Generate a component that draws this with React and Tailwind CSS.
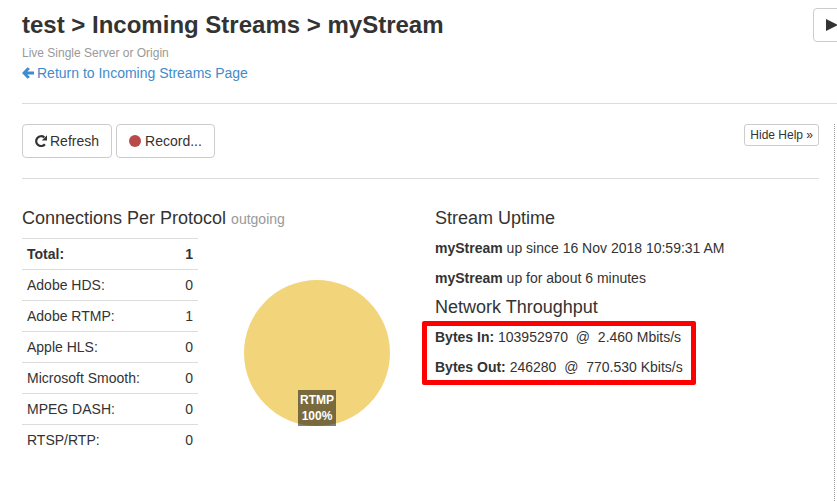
import React from "react";

const protocols = [
  ["Adobe HDS:", 0],
  ["Adobe RTMP:", 1],
  ["Apple HLS:", 0],
  ["Microsoft Smooth:", 0],
  ["MPEG DASH:", 0],
  ["RTSP/RTP:", 0],
];

const buttonClass =
  "flex h-[34px] shrink-0 items-center rounded border border-[#cccccc] bg-white px-3 text-[#333333]";

function ArrowIcon() {
  return (
    <svg viewBox="0 0 12 12" className="mr-[3px] h-3 w-3" fill="currentColor" aria-hidden="true">
      <path d="M0 6 L5.6 0.2 L8 1.9 L5.3 4.6 H12 V7.4 H5.3 L8 10.1 L5.6 11.8 Z" />
    </svg>
  );
}

function RefreshIcon() {
  return (
    <svg viewBox="0 0 12 12" className="mr-[3px] h-3 w-3" aria-hidden="true">
      <path d="M9.9 9.2 A4.9 4.9 0 1 1 9.3 2.4" fill="none" stroke="currentColor" strokeWidth="2.2" />
      <path d="M12 0.2 V5.4 H6.8 Z" fill="currentColor" />
    </svg>
  );
}

function Header() {
  return (
    <header className="flex justify-between border-b border-[#dddddd] pt-2 pb-5">
      <div className="pt-[3px]">
        <h1 className="text-2xl leading-7 font-bold whitespace-nowrap">
          test &gt; Incoming Streams &gt; myStream
        </h1>
        <p className="mt-1 text-xs leading-5 text-[#999999]">Live Single Server or Origin</p>
        <a href="#incoming-streams" className="flex items-center text-[#428bca]">
          <ArrowIcon />
          Return to Incoming Streams Page
        </a>
      </div>
      <button type="button" aria-label="Play" className={buttonClass + " -mr-[14px]"}>
        <svg viewBox="0 0 12 12" className="h-3 w-3" fill="currentColor" aria-hidden="true">
          <path d="M0 0 L12 6 L0 12 Z" />
        </svg>
      </button>
    </header>
  );
}

function Toolbar() {
  return (
    <div className="flex items-start justify-between border-b border-[#dddddd] pb-5">
      <div className="flex gap-1">
        <button type="button" className={buttonClass}>
          <RefreshIcon />
          Refresh
        </button>
        <button type="button" className={buttonClass}>
          <span className="mr-1 h-3 w-3 rounded-full bg-[#b94a48]" />
          Record...
        </button>
      </div>
      <button
        type="button"
        className="h-[22px] rounded-[3px] border border-[#cccccc] bg-white px-[5px] text-xs"
      >
        Hide Help »
      </button>
    </div>
  );
}

function Connections() {
  return (
    <section className="w-[413px] shrink-0">
      <h2 className="mb-[9px] text-lg leading-5">
        Connections Per Protocol <small className="text-sm leading-5 text-[#999999]">outgoing</small>
      </h2>
      <div className="flex">
        <table className="w-44 border-collapse self-start">
          <tbody>
            <tr className="border-t border-[#dddddd] font-bold">
              <th scope="row" className="p-[5px] text-left">Total:</th>
              <td className="p-[5px] text-right">1</td>
            </tr>
            {protocols.map(([name, count]) => (
              <tr key={name} className="border-t border-[#dddddd]">
                <th scope="row" className="p-[5px] text-left font-normal">{name}</th>
                <td className="p-[5px] text-right">{count}</td>
              </tr>
            ))}
          </tbody>
        </table>
        <div className="mt-[42px] ml-[46px] flex h-[146px] w-[146px] items-end justify-center rounded-full bg-[#f2d57a]">
          <div className="bg-black/50 px-[2px] py-[2px] text-center text-xs font-bold text-white">
            RTMP
            <br />
            100%
          </div>
        </div>
      </div>
    </section>
  );
}

function StreamDetails() {
  return (
    <section className="whitespace-nowrap">
      <h2 className="mb-2.5 text-lg leading-5">Stream Uptime</h2>
      <p className="mb-2.5">
        <strong>myStream</strong> up since 16 Nov 2018 10:59:31 AM
      </p>
      <p>
        <strong>myStream</strong> up for about 6 minutes
      </p>
      <h2 className="mt-[9px] mb-2.5 text-lg leading-5">Network Throughput</h2>
      <div className="relative w-fit">
        <p className="mb-2.5">
          <strong>Bytes In:</strong> 103952970 &nbsp;@&nbsp; 2.460 Mbits/s
        </p>
        <p>
          <strong>Bytes Out:</strong> 246280 &nbsp;@&nbsp; 770.530 Kbits/s
        </p>
        <div className="pointer-events-none absolute -inset-x-[13px] -top-1.5 -bottom-2 rounded-[2px] border-5 border-[#ff0000]" />
      </div>
    </section>
  );
}

export default function App() {
  return (
    <div className="flex min-h-screen flex-col overflow-hidden bg-white pl-[22px] font-['Liberation_Sans',Arial,sans-serif] text-sm text-[#333333]">
      <Header />
      <div className="mt-5 flex grow">
        <main className="mr-[15px] min-w-0 grow">
          <Toolbar />
          <div className="flex pt-[29px]">
            <Connections />
            <StreamDetails />
          </div>
        </main>
        <aside className="w-[3px] shrink-0 border-l border-dotted border-[#999999]" />
      </div>
    </div>
  );
}
